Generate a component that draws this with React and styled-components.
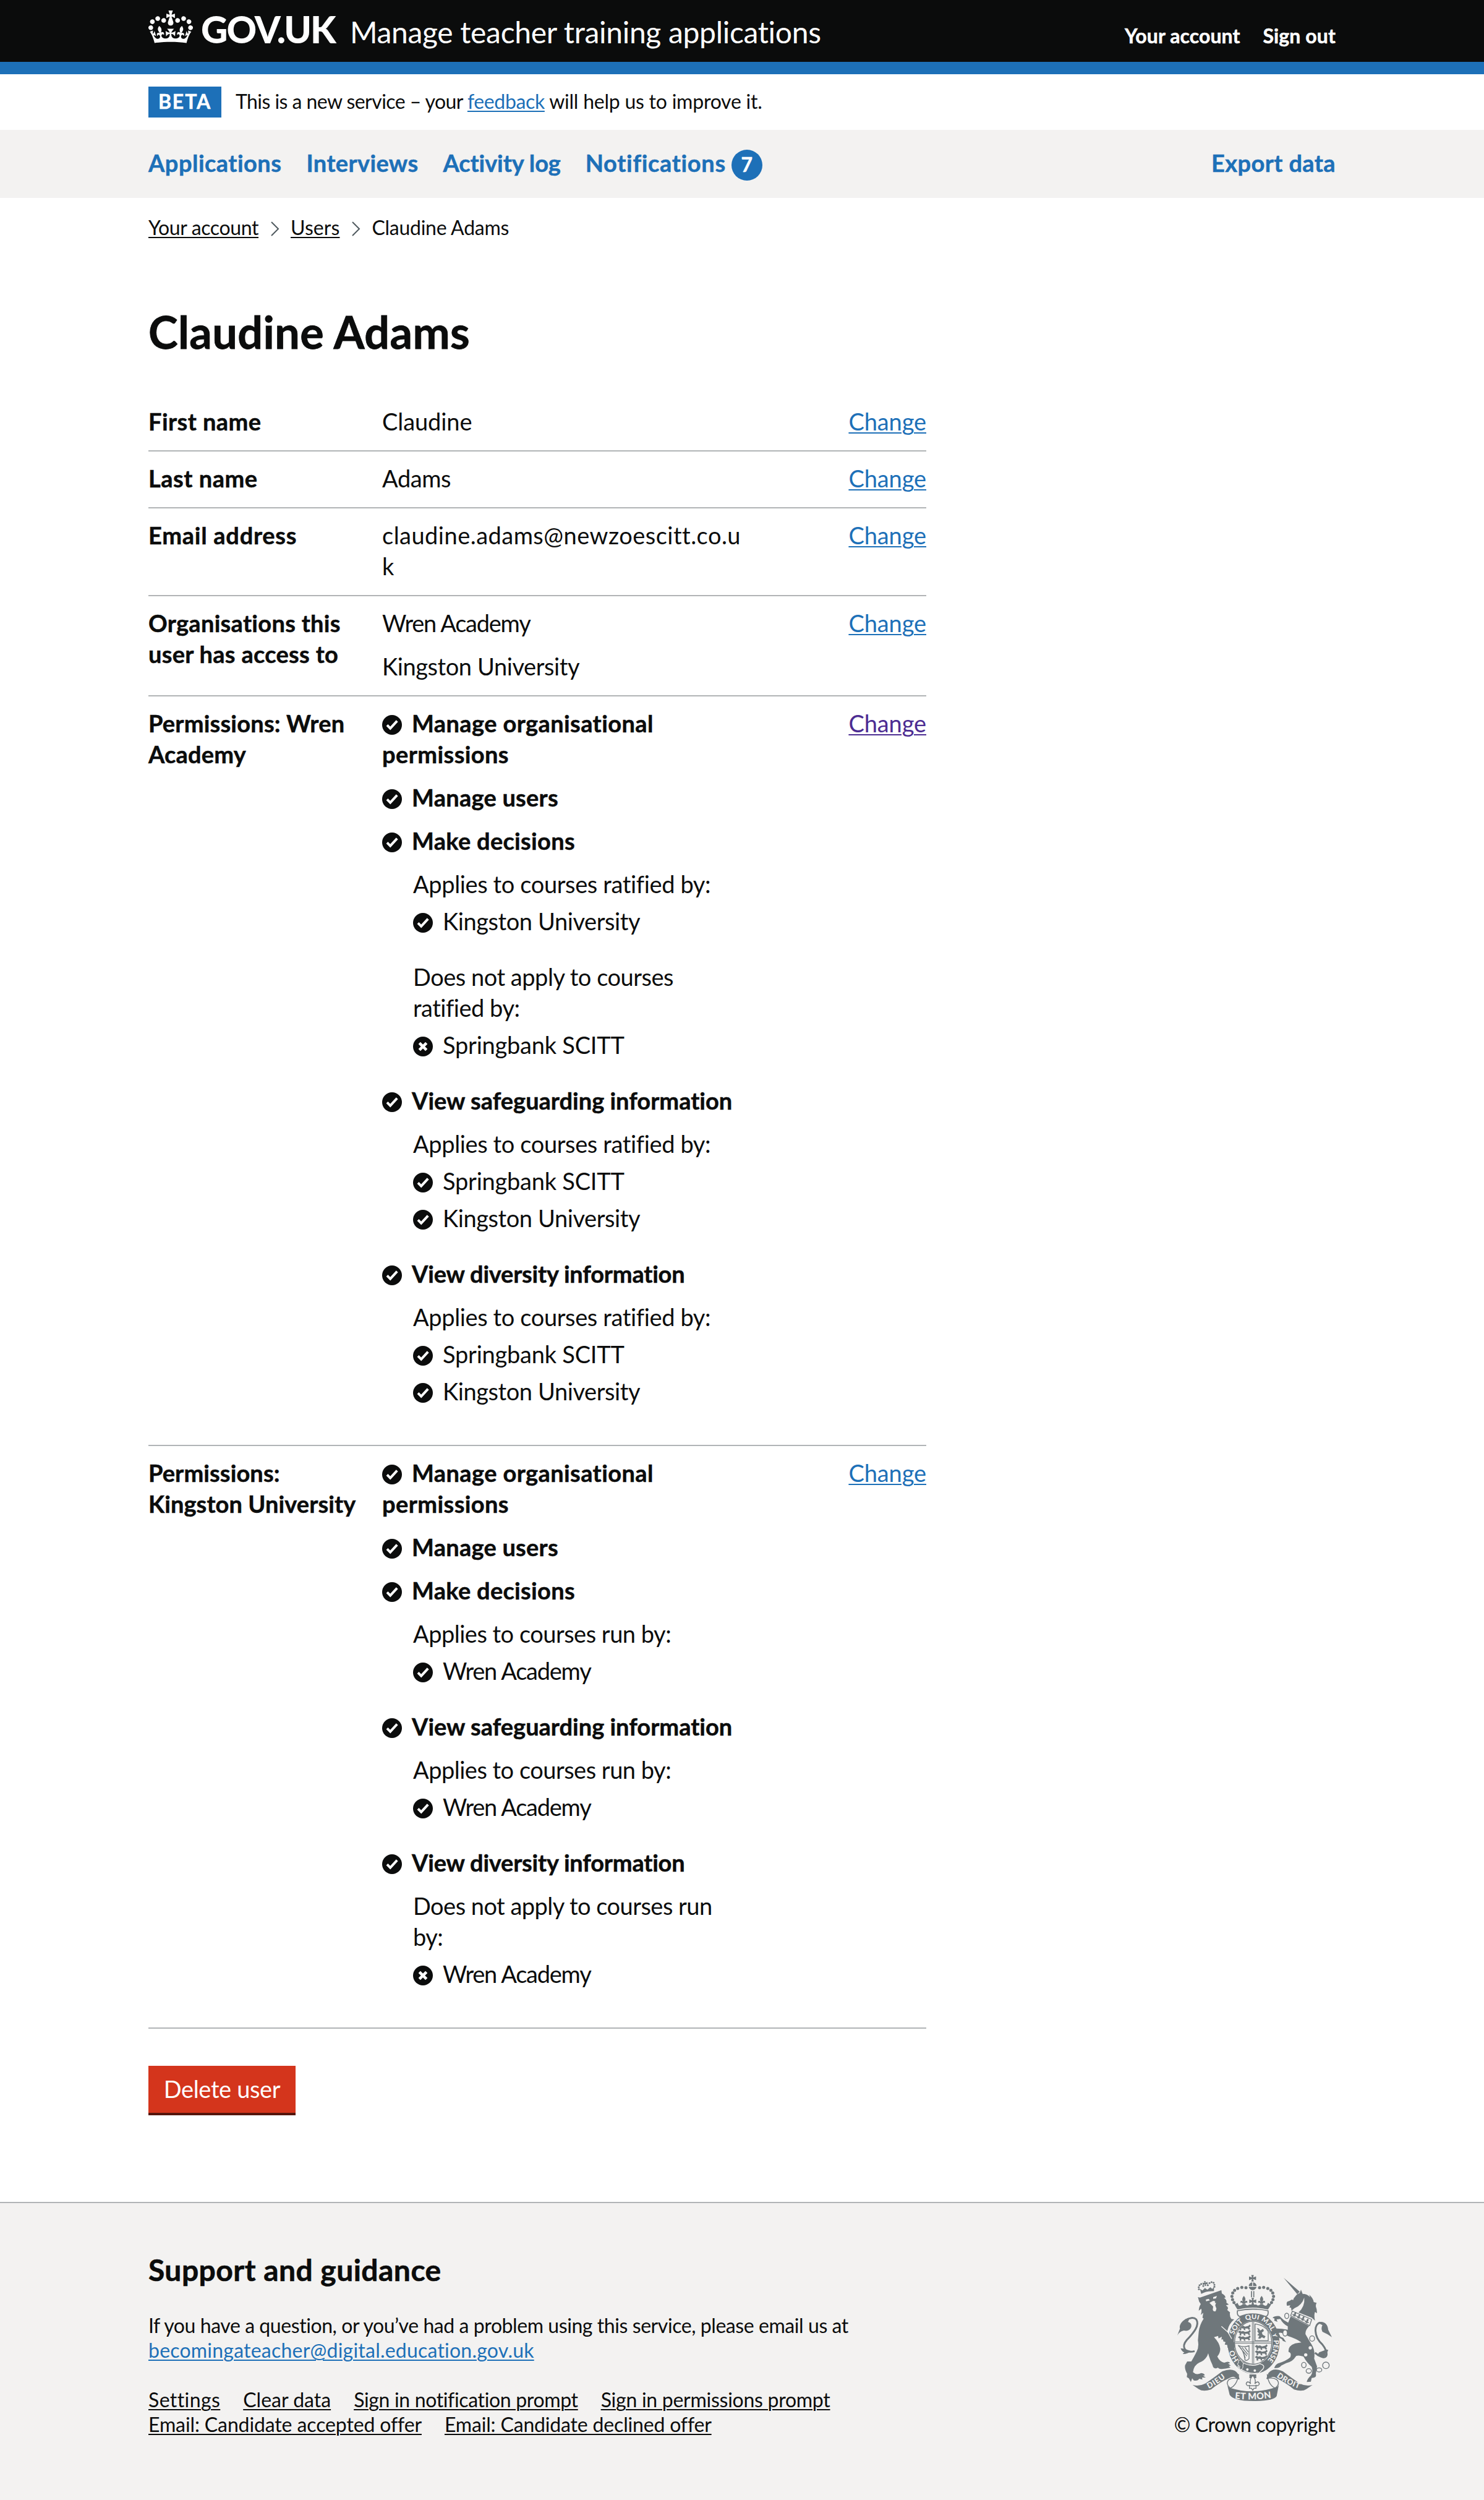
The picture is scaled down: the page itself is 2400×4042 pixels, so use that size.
import React from 'react';
import styled, { createGlobalStyle } from 'styled-components';

const ink = '#0b0c0c';
const blue = '#1d70b8';
const pale = '#f3f2f1';
const crestGrey = '#6f777b';

const GlobalStyle = createGlobalStyle`
  * { box-sizing: border-box; }
  body {
    margin: 0;
    background: #fff;
    color: ${ink};
    font-family: Lato, "Liberation Sans", sans-serif;
    font-size: 38px;
    line-height: 50px;
    font-variant-ligatures: none;
  }
  h1, h2, p, ul, ol, dl, dt, dd { margin: 0; padding: 0; }
  ul, ol { list-style: none; }
`;

const Container = styled.div`
  width: 1920px;
  margin: 0 auto;
`;

const T = styled.span`
  letter-spacing: ${(p) => p.$track || 0}px;
`;

const Link = styled.a`
  color: ${(p) => (p.$tone === 'visited' ? '#4c2c92' : p.$tone === 'text' ? ink : blue)};
  letter-spacing: ${(p) => p.$track || 0}px;
  text-decoration: underline;
  text-decoration-thickness: 2px;
  text-underline-offset: 3px;
`;

/* Header */
const Header = styled.header`
  height: 120px;
  background: ${ink};
  border-bottom: 20px solid ${blue};
  color: #fff;
`;
const HeaderRow = styled(Container)`
  display: flex;
  align-items: baseline;
  padding-top: 17px;
`;
const CrownIcon = styled.svg`
  width: 72px;
  height: 53px;
  margin-bottom: -4px;
  fill: #fff;
`;
const Wordmark = styled.span`
  width: 254px;
  padding-left: 13px;
  font-size: 60px;
  line-height: 60px;
  font-weight: 900;
  letter-spacing: -1.93px;
  white-space: nowrap;
`;
const ProductName = styled.span`
  flex: 1;
  font-size: 48px;
  letter-spacing: -0.32px;
`;
const AccountNav = styled.nav`
  display: flex;
  gap: 37px;
  font-size: 32px;
  line-height: 40px;
  font-weight: 700;
  letter-spacing: 0.1px;
  -webkit-text-stroke: 0.5px currentColor;
`;

/* Phase banner */
const PhaseBanner = styled(Container)`
  display: flex;
  align-items: baseline;
  height: 90px;
  padding-top: 20px;
  font-size: 32px;
  line-height: 40px;
`;
const PhaseTag = styled.strong`
  width: 118px;
  margin-right: 23px;
  padding: 1px 0 3px;
  background: ${blue};
  color: #fff;
  text-align: center;
  line-height: 46px;
  letter-spacing: 1.9px;
  -webkit-text-stroke: 0.5px currentColor;
`;

/* Primary navigation */
const PrimaryBar = styled.div`
  height: 110px;
  background: ${pale};
`;
const PrimaryNav = styled(Container)`
  display: flex;
  align-items: baseline;
  gap: 40px;
  padding-top: 28px;
`;
const NavItem = styled.a`
  color: ${blue};
  font-weight: 700;
  letter-spacing: ${(p) => p.$track || 0}px;
  margin-left: ${(p) => (p.$last ? 'auto' : 0)};
  -webkit-text-stroke: 0.5px currentColor;
`;
const Count = styled.span`
  display: inline-block;
  width: 50px;
  height: 50px;
  margin-left: 9px;
  padding-top: 1px;
  border-radius: 50%;
  background: ${blue};
  color: #fff;
  font-size: 32px;
  line-height: 46px;
  text-align: center;
  letter-spacing: 0;
`;

/* Breadcrumbs */
const Breadcrumbs = styled.ol`
  display: flex;
  align-items: center;
  margin-top: 28px;
  font-size: 32px;
  line-height: 40px;
`;
const Chevron = styled.svg`
  width: 14px;
  height: 26px;
  margin: 4px 18px 0 20px;
  fill: none;
  stroke: #505a5f;
  stroke-width: 2;
`;

/* Main */
const Heading = styled.h1`
  margin: 108px 0 62px;
  font-size: 72px;
  line-height: 80px;
  font-weight: 700;
  letter-spacing: 0.4px;
  -webkit-text-stroke: 0.8px currentColor;
`;
const SummaryList = styled.dl`
  width: 1258px;
`;
const SummaryRow = styled.div`
  display: grid;
  grid-template-columns: 378px 628px 1fr;
  padding: 18px 0 22px;
  border-bottom: 2px solid #b1b4b6;
`;
const Key = styled.dt`
  padding-right: 20px;
  font-weight: 700;
  letter-spacing: ${(p) => p.$track || 0}px;
  -webkit-text-stroke: 0.5px currentColor;
`;
const Value = styled.dd`
  padding-right: 40px;
  overflow-wrap: anywhere;
`;
const Action = styled.dd`
  text-align: right;
`;
const Stack = styled.ul`
  display: flex;
  flex-direction: column;
  gap: 20px;
`;
const PermissionTitle = styled.div`
  font-weight: 700;
  letter-spacing: ${(p) => p.$track || 0}px;
  -webkit-text-stroke: 0.5px currentColor;
`;
const Scope = styled.div`
  padding: ${(p) => (p.$first ? '20px' : '0')} 10px ${(p) => (p.$close ? '20px' : '40px')} 50px;
`;
const ScopeItem = styled.div`
  margin-top: 10px;
`;
const StatusSvg = styled.svg`
  width: 32px;
  height: 32px;
  margin-right: 16px;
  vertical-align: -4px;
`;
const DeleteButton = styled.button`
  display: block;
  width: 238px;
  height: 76px;
  margin: 60px 0 144px;
  padding: 12px 0 14px;
  border: 0;
  background: #d4351c;
  box-shadow: 0 4px 0 #55150b;
  color: #fff;
  font: inherit;
  letter-spacing: -0.36px;
`;

/* Footer */
const Footer = styled.footer`
  height: 482px;
  background: ${pale};
  border-top: 2px solid #b1b4b6;
  font-size: 32px;
  line-height: 40px;
`;
const FooterRow = styled(Container)`
  display: flex;
  justify-content: space-between;
  align-items: flex-start;
  padding-top: 83px;
`;
const FooterMain = styled.div`
  width: 1400px;
`;
const FooterHeading = styled.h2`
  margin-bottom: 45px;
  font-size: 48px;
  line-height: 50px;
  font-weight: 700;
  letter-spacing: 0.46px;
  -webkit-text-stroke: 0.6px currentColor;
`;
const FooterLinks = styled.ul`
  display: flex;
  flex-wrap: wrap;
  column-gap: 37px;
  margin-top: 40px;
`;
const Copyright = styled.div`
  display: flex;
  flex-direction: column;
  align-items: center;
  gap: 18px;
  width: 262px;
  padding-top: 33px;
  white-space: nowrap;
`;
const CrestSvg = styled.svg`
  width: 250px;
  height: 204px;
`;
const CrestText = styled.text`
  font-family: Lato, sans-serif;
  font-weight: 900;
  font-size: ${(p) => p.$size}px;
  letter-spacing: ${(p) => p.$track || 0}px;
  fill: ${pale};
  text-anchor: middle;
`;

function Crown() {
  return (
    <CrownIcon viewBox="0 0 132 97" aria-hidden="true">
      <path d="M25 30.2c3.5 1.5 7.7-.2 9.1-3.7 1.5-3.6-.2-7.8-3.9-9.2-3.6-1.4-7.6.3-9.1 3.9-1.4 3.5.3 7.5 3.9 9zM9 39.5c3.6 1.5 7.8-.2 9.2-3.7 1.5-3.6-.2-7.8-3.9-9.1-3.6-1.5-7.6.2-9.1 3.8-1.4 3.5.3 7.5 3.8 9zM4.4 57.2c3.5 1.5 7.7-.2 9.1-3.8 1.5-3.6-.2-7.7-3.9-9.1-3.5-1.5-7.6.3-9.1 3.8-1.4 3.5.3 7.6 3.9 9.1zm38.3-21.4c3.5 1.5 7.7-.2 9.1-3.8 1.5-3.6-.2-7.7-3.9-9.1-3.6-1.5-7.6.3-9.1 3.8-1.3 3.6.4 7.7 3.9 9.1zm64.4-5.6c-3.6 1.5-7.8-.2-9.1-3.7-1.5-3.6.2-7.8 3.8-9.2 3.6-1.4 7.7.3 9.2 3.9 1.3 3.5-.4 7.5-3.9 9zm15.9 9.3c-3.6 1.5-7.7-.2-9.1-3.7-1.5-3.6.2-7.8 3.7-9.1 3.6-1.5 7.7.2 9.2 3.8 1.5 3.5-.3 7.5-3.8 9zm4.7 17.7c-3.6 1.5-7.8-.2-9.2-3.8-1.5-3.6.2-7.7 3.9-9.1 3.6-1.5 7.7.3 9.2 3.8 1.3 3.5-.4 7.6-3.9 9.1zM89.3 35.8c-3.6 1.5-7.8-.2-9.2-3.8-1.4-3.6.2-7.7 3.9-9.1 3.6-1.5 7.7.3 9.2 3.8 1.4 3.6-.3 7.7-3.9 9.1zM69.7 17.7l8.9 4.7V9.3l-8.9 2.8c-.2-.3-.5-.6-.9-.9L72.4 0H59.6l3.5 11.2c-.3.3-.6.5-.9.9l-8.8-2.8v13.1l8.8-4.7c.3.3.6.7.9.9l-5 15.4v.1c-.2.8-.4 1.6-.4 2.4 0 4.1 3.1 7.5 7 8.1h.2c.3 0 .7.1 1 .1.4 0 .7 0 1-.1h.2c4-.6 7.1-4.1 7.1-8.1 0-.8-.1-1.7-.4-2.4V34l-5.1-15.4c.4-.2.7-.6 1-.9zM66 92.8c16.9 0 32.8 1.1 47.1 3.2 4-16.9 8.9-26.7 14-33.5l-9.6-3.4c1 4.9 1.1 7.2 0 10.2-1.5-1.4-3-4.3-4.2-8.7L108.6 76c2.8-2 5-3.2 7.5-3.3-4.4 9.4-10 11.9-13.6 11.2-4.3-.8-6.3-4.6-5.6-7.9 1-4.7 5.7-5.9 8-.5 4.3-8.7-3-11.4-7.6-8.8 7.1-7.2 7.9-13.5 2.1-21.1-8 6.1-8.1 12.3-4.5 20.8-4.7-5.4-12.1-2.5-9.5 6.2 3.4-5.2 7.9-2 7.2 3.1-.6 4.3-6.4 7.8-13.5 7.2-10.3-.9-10.9-8-11.2-13.8 2.5-.5 7.1 1.8 11 7.3L80.2 60c-4.1 4.4-8 5.3-12.3 5.4 1.4-4.4 8-11.6 8-11.6H55.5s6.4 7.2 7.9 11.6c-4.2-.1-8-1-12.3-5.4l1.4 16.4c3.9-5.5 8.5-7.7 10.9-7.3-.3 5.8-.9 12.8-11.1 13.8-7.2.6-12.9-2.9-13.5-7.2-.7-5 3.8-8.3 7.1-3.1 2.7-8.7-4.6-11.6-9.4-6.2 3.7-8.5 3.6-14.7-4.6-20.8-5.8 7.6-5 13.9 2.2 21.1-4.7-2.6-11.9.1-7.7 8.8 2.3-5.5 7.1-4.2 8.1.5.7 3.3-1.3 7.1-5.7 7.9-3.5.7-9-1.8-13.5-11.2 2.5.1 4.7 1.3 7.5 3.3l-4.7-15.4c-1.2 4.4-2.7 7.2-4.3 8.7-1.1-3-.9-5.3 0-10.2l-9.5 3.4c5 6.9 9.9 16.7 14 33.5 14.8-2.1 30.8-3.2 47.7-3.2z" />
    </CrownIcon>
  );
}

function Status({ no }) {
  return (
    <StatusSvg viewBox="0 0 32 32" aria-hidden="true">
      <circle cx="16" cy="16" r="16" fill={ink} />
      <path
        d={no ? 'M10.3 10.3l11.4 11.4M21.7 10.3L10.3 21.7' : 'M8 16.4l5.2 5.2L24.2 9.6'}
        fill="none"
        stroke="#fff"
        strokeWidth={no ? 4.6 : 4}
      />
    </StatusSvg>
  );
}

const arch = [[345, 86], [325, 85], [305, 90], [290, 99], [281, 112], [277, 128], [280, 144], [287, 158]];
const cross = 'M-6-16H6L3-4 17-9V9L3 4 6 16H-6L-3 4-17 9V-9L-3-4z';
const fleur = 'M0-22C10-10 9-2 4 6 12-2 20 2 16 12 12 8 8 10 6 16H-6C-8 10-12 8-16 12-20 2-12-2-4 6-9-2-10-10 0-22z';
const beast = 'M0 6L8 0 14 4 22 2 30 6 44 3 50-3 54 4 48 10 52 16 46 20 42 14 30 14 32 21 25 20 24 14 14 13 14 21 7 20 8 12z';

function RoyalArms() {
  return (
    <CrestSvg viewBox="12 24 750 612" fill={crestGrey} aria-label="Royal coat of arms">
      <defs>
        <path id="garter" d="M381 470A99 116 0 0 1 381 238A99 116 0 0 1 381 470" />
        <path id="scrollLeft" d="M155 580Q205 558 256 514" />
        <path id="scrollRight" d="M484 511Q545 558 614 580" />
        <path id="scrollMiddle" d="M285 624Q380 634 475 620" />
        <clipPath id="shield"><ellipse cx="380" cy="353" rx="88" ry="102" /></clipPath>
      </defs>

      {/* garter and shield */}
      <ellipse cx="382" cy="355" rx="126" ry="149" />
      <ellipse cx="380" cy="353" rx="94" ry="107" fill={pale} />
      <g clipPath="url(#shield)">
        <g fill="none" stroke={crestGrey} strokeWidth="3">
          <path d="M376 240v220M383 240v220M285 349h190M285 356h190" />
          <path d="M389 262v81h64v-44Q436 268 389 262" strokeWidth="4" />
          <path d="M307 366q28 12 53 2v62q-12 14-20 6-4-46-33-70M316 376l34 42M326 376l28 34M340 376l16 22M332 400l10 28" strokeWidth="4" />
        </g>
        {[268, 294, 320].map((y) => <path key={y} d={beast} transform={`translate(306 ${y}) scale(1.15)`} />)}
        {[364, 390, 416].map((y) => <path key={y} d={beast} transform={`translate(388 ${y}) scale(1.15)`} />)}
        <path d="M398 282l10 2 6 10 14-8 4 10-10 8 4 10 14 8-6 10-12-6-8 8-10-2 6-12-10-4 8-8-8-10 4-6z" />
      </g>
      <ellipse cx="380" cy="353" rx="90" ry="104" fill="none" stroke={crestGrey} strokeWidth="4" />
      <path d="M318 444Q370 475 412 455Q440 462 428 480L408 500Q350 510 306 470z" stroke={pale} strokeWidth="4" />
      <path d="M308 440q14-8 18 6 10 4 4 16 4 20-14 22-4-10 0-16-12-4-12-14 8 0 4-14z" stroke={pale} strokeWidth="3" />
      <circle cx="352" cy="483" r="6" fill={pale} />
      <circle cx="388" cy="488" r="6" fill={pale} />
      <CrestText $size={35}><textPath href="#garter" startOffset="16%">HO</textPath></CrestText>
      <CrestText $size={34}><textPath href="#garter" startOffset="36.5%">SOIT</textPath></CrestText>
      <CrestText $size={34}><textPath href="#garter" startOffset="49.2%">QUI</textPath></CrestText>
      <CrestText $size={34}><textPath href="#garter" startOffset="61%">MAL</textPath></CrestText>
      <CrestText $size={30}><textPath href="#garter" startOffset="69.8%">Y</textPath></CrestText>
      <CrestText $size={34}><textPath href="#garter" startOffset="80.8%">PENSE</textPath></CrestText>

      {/* crown */}
      <path d="M304 198Q378 182 452 198Q456 222 440 226Q378 200 316 226Q300 222 304 198z" fill={pale} stroke={crestGrey} strokeWidth="5" />
      <path d="M286 156Q290 172 304 192Q378 174 452 192Q466 172 472 156L462 166 452 160 446 172Q436 178 426 166H416Q404 178 396 168H360Q352 178 342 166H330Q318 178 310 172L304 160 294 166z" />
      <path d={cross} transform="translate(377 40.5)" />
      <circle cx="377.5" cy="79" r="19" />
      <path d="M357 80h41M377.5 58v20" stroke={pale} strokeWidth="4" />
      <path d="M372 103v30M383 103v30" stroke={crestGrey} strokeWidth="5" />
      <path d={cross} transform="translate(378 152)" />
      <path d={fleur} transform="translate(335 148)" />
      <path d={fleur} transform="translate(421 148)" />
      {arch.map(([x, y]) => (
        <g key={x}>
          <circle cx={x} cy={y} r="7.500" />
          <circle cx={756 - x} cy={y} r="7.500" />
        </g>
      ))}

      {/* lion */}
      <path d="M96 394C52 406 28 376 58 340 92 304 122 268 104 240 92 228 70 232 52 244" fill="none" stroke={crestGrey} strokeWidth="9" />
      <path d="M42 382L28 380Q34 396 46 400L38 408Q58 410 80 394z" />
      <path d="M72 234C48 232 18 262 25 284L12 318Q22 298 44 294 72 300 80 276 84 258 64 252z" />
      <path d="M112 132L122 134 226 98 228 114Q244 122 246 134L238 136Q254 146 250 158L262 168 248 172Q264 184 254 194L268 206Q264 222 274 238L288 240Q262 262 256 292L254 300 276 330 280 342Q294 352 290 378L280 372 276 384 266 376 256 378 254 364 242 362 246 350 234 346Q238 334 226 338L228 324 212 332 210 320 190 326Q216 352 220 380 222 402 206 420 218 446 240 450 262 440 268 452L258 454 272 464 262 466 270 474Q240 482 218 480L208 474Q196 482 186 472L182 460Q168 430 162 404 152 438 118 450 92 462 88 496 104 512 128 500 148 504 144 512L136 512 150 522 132 522 134 532 118 528Q112 540 92 536L84 526 78 544 68 526 58 520 60 504Q46 480 50 462L60 444 80 444Q94 420 106 396 118 374 112 342L116 300Q120 266 140 236L134 232 138 208 126 218Q132 200 128 188L116 198Q118 176 126 166L118 154z" />
      <path d="M226 274L258 302 276 334" fill="none" stroke={pale} strokeWidth="4" />
      <path d="M150 144l14-4 6 8-18 4zM186 132l18-6-4 12-14 2zM168 160l18-10 10 2-2 8 6 0-4 12 6 16-4 12q-12 4-14-8l2-14z" fill={pale} />
      <path d="M122 92l6 24Q156 100 190 104L190 82 182 92 172 84 158 96 146 88 134 100z" />
      <path d={cross} transform="translate(147 66) rotate(-10) scale(.7)" />
      {[[117, 94], [116, 84], [120, 74], [128, 68], [138, 78], [160, 74], [168, 64], [178, 59], [188, 62], [192, 72], [192, 82]].map(([x, y]) => (
        <circle key={`${x}-${y}`} cx={x} cy={y} r="4.6" />
      ))}
      <path d="M120 124Q160 104 206 102" fill="none" stroke={pale} strokeWidth="3" />

      {/* unicorn */}
      <path d="M680 402C744 452 750 404 716 362 672 322 674 262 706 256" fill="none" stroke={crestGrey} strokeWidth="9" />
      <path d="M736 386L744 388Q740 404 730 408L736 412Q718 430 690 416L700 400z" />
      <path d="M692 256C720 244 742 260 744 290L762 326Q740 310 716 300 708 284 716 268z" />
      <path d="M528 38L606 106 594 118z" />
      <path d="M594 118L606 112 612 96 620 116Q642 116 656 132L652 120Q672 138 674 156L688 160Q680 172 688 190L690 210 680 204Q674 220 680 246L664 232 600 206Q632 178 628 134 616 172 580 186L566 198 564 184 556 182 560 172 544 174Q540 160 546 154 574 146 588 124z" />
      <path d="M562 142l16-6-4 10z" fill={pale} />
      <path d="M570 200L664 240 654 270 562 222z" fill={pale} stroke={crestGrey} strokeWidth="4" />
      {[[582, 216], [602, 226], [622, 236], [642, 248]].map(([x, y]) => (
        <path key={x} d={fleur} transform={`translate(${x} ${y}) rotate(25) scale(.62)`} />
      ))}
      <path d="M562 226L652 272Q632 292 634 312 650 340 664 362 682 390 676 430L690 468 684 504Q690 524 664 524L660 542 640 544Q642 528 660 512 672 494 664 470 640 450 624 420 600 412 588 418 572 446 540 452L516 464Q508 478 482 476 488 460 500 454 540 442 560 424 568 402 552 398 548 368 584 356L614 352Q590 334 552 322L530 312Q516 302 504 306L512 324 526 330 540 350 524 344 520 336Q494 328 486 298L492 284Q520 284 548 290L548 274Q524 262 512 238L494 240 498 252 482 246 484 236 474 232Q484 222 508 224 526 244 550 256z" />
      <g fill="none" stroke={crestGrey} strokeWidth="4">
        <ellipse cx="543" cy="223" rx="10" ry="13" fill={pale} />
        <ellipse cx="535" cy="306" rx="11" ry="15" fill={pale} />
        <ellipse cx="666" cy="333" rx="12" ry="13" fill={pale} />
        <ellipse cx="626" cy="461" rx="11" ry="13" />
        <ellipse cx="650" cy="490" rx="13" ry="11" />
        <ellipse cx="700" cy="485" rx="13" ry="10" />
        <circle cx="733" cy="463" r="16" />
      </g>
      <circle cx="657" cy="378" r="8" fill={pale} />
      <circle cx="635" cy="412" r="8" fill={pale} />

      {/* motto scroll */}
      <path d="M86 558Q120 566 150 550 190 522 230 492 286 470 308 506L314 530 296 524Q284 512 262 526 214 548 176 580 136 592 116 578z" />
      <path d="M668 558Q634 566 604 550 564 522 524 492 478 470 454 500L444 528 466 522Q480 514 494 526 540 548 578 580 618 592 638 578z" />
      <g fill="none" stroke={crestGrey} strokeWidth="4">
        <path d="M312 530Q284 520 262 532 244 552 268 572M310 506Q302 560 268 574" />
        <path d="M446 528Q474 520 494 532 514 552 488 572M448 506Q454 560 488 574" />
      </g>
      <path d="M268 572Q378 606 488 570Q504 568 506 550L494 612Q480 636 380 636Q284 636 266 606L254 556Q256 568 268 572z" />
      <CrestText $size={37} $track={3}><textPath href="#scrollLeft" startOffset="50%">DIEU</textPath></CrestText>
      <CrestText $size={37} $track={2}><textPath href="#scrollRight" startOffset="50%">DROIT</textPath></CrestText>
      <CrestText $size={44} $track={1}><textPath href="#scrollMiddle" startOffset="50%">ET MON</textPath></CrestText>
      <path d="M362 507h33v18h-33z" />
      <path d="M378 512Q396 534 388 552 404 534 410 552 406 566 394 560V574H384L378 584 372 574H362V560Q350 566 346 552 352 534 368 552 360 534 378 512z" fill={pale} stroke={crestGrey} strokeWidth="4" />
      <path d="M362 562h32" stroke={crestGrey} strokeWidth="4" />
    </CrestSvg>
  );
}

const LEDE = {
  ratified: { track: -0.37, text: 'Applies to courses ratified by:' },
  notRatified: { track: -0.48, text: 'Does not apply to courses ratified by:' },
  run: { track: -0.5, text: 'Applies to courses run by:' },
  notRun: { track: -0.53, text: 'Does not apply to courses run by:' },
};
const ORG = {
  wren: ['Wren Academy', -1.25],
  kingston: ['Kingston University', -0.42],
  springbank: ['Springbank SCITT', -0.23],
};
const TITLE_TRACK = {
  'Manage organisational permissions': 0.4,
  'Manage users': 0.25,
  'Make decisions': 0.3,
  'View safeguarding information': 0,
  'View diversity information': -0.2,
};

const wrenPermissions = [
  { title: 'Manage organisational permissions' },
  { title: 'Manage users' },
  {
    title: 'Make decisions',
    scopes: [
      { lede: 'ratified', orgs: ['kingston'] },
      { lede: 'notRatified', orgs: ['springbank'], no: true },
    ],
  },
  { title: 'View safeguarding information', scopes: [{ lede: 'ratified', orgs: ['springbank', 'kingston'] }] },
  { title: 'View diversity information', scopes: [{ lede: 'ratified', orgs: ['springbank', 'kingston'] }] },
];
const kingstonPermissions = [
  { title: 'Manage organisational permissions' },
  { title: 'Manage users' },
  { title: 'Make decisions', scopes: [{ lede: 'run', orgs: ['wren'] }] },
  { title: 'View safeguarding information', scopes: [{ lede: 'run', orgs: ['wren'] }] },
  { title: 'View diversity information', scopes: [{ lede: 'notRun', orgs: ['wren'], no: true }] },
];

function Permissions({ items }) {
  return (
    <Stack>
      {items.map(({ title, scopes = [] }, n) => (
        <li key={title}>
          <PermissionTitle $track={TITLE_TRACK[title]}><Status />{title}</PermissionTitle>
          {scopes.map((scope, i) => (
            <Scope key={scope.lede} $first={i === 0} $close={i === scopes.length - 1 && n < items.length - 1}>
              <T $track={LEDE[scope.lede].track}>{LEDE[scope.lede].text}</T>
              {scope.orgs.map((org) => (
                <ScopeItem key={org}><Status no={scope.no} /><T $track={ORG[org][1]}>{ORG[org][0]}</T></ScopeItem>
              ))}
            </Scope>
          ))}
        </li>
      ))}
    </Stack>
  );
}

function Row({ name, track, tone, children }) {
  return (
    <SummaryRow>
      <Key $track={track}>{name}</Key>
      <Value>{children}</Value>
      <Action><Link href="#" $tone={tone} $track={-0.1}>Change</Link></Action>
    </SummaryRow>
  );
}

const footerLinks = [
  ['Settings', 0.4],
  ['Clear data', 0],
  ['Sign in notification prompt', -0.35],
  ['Sign in permissions prompt', -0.27],
  ['Email: Candidate accepted offer', -0.12],
  ['Email: Candidate declined offer', -0.17],
];

export default function App() {
  return (
    <>
      <GlobalStyle />
      <Header>
        <HeaderRow>
          <Crown />
          <Wordmark>GOV.UK</Wordmark>
          <ProductName>Manage teacher training applications</ProductName>
          <AccountNav>
            <span>Your account</span>
            <span>Sign out</span>
          </AccountNav>
        </HeaderRow>
      </Header>
      <PhaseBanner>
        <PhaseTag>BETA</PhaseTag>
        <p>
          <T $track={-0.56}>This is a new service – your </T>
          <Link href="#" $track={-0.35}>feedback</Link>
          <T $track={-0.23}> will help us to improve it.</T>
        </p>
      </PhaseBanner>
      <PrimaryBar>
        <PrimaryNav>
          <NavItem $track={0.48}>Applications</NavItem>
          <NavItem $track={0.38}>Interviews</NavItem>
          <NavItem $track={-0.1}>Activity log</NavItem>
          <NavItem $track={0.68}>Notifications<Count>7</Count></NavItem>
          <NavItem $last $track={0.4}>Export data</NavItem>
        </PrimaryNav>
      </PrimaryBar>

      <Container as="main">
        <Breadcrumbs>
          <li><Link href="#" $tone="text" $track={-0.38}>Your account</Link></li>
          <Chevron viewBox="0 0 14 26"><path d="M1 2l11 11L1 24" /></Chevron>
          <li><Link href="#" $tone="text" $track={0.1}>Users</Link></li>
          <Chevron viewBox="0 0 14 26"><path d="M1 2l11 11L1 24" /></Chevron>
          <li><T $track={-0.28}>Claudine Adams</T></li>
        </Breadcrumbs>
        <Heading>Claudine Adams</Heading>
        <SummaryList>
          <Row name="First name" track={0.44}><T $track={-0.08}>Claudine</T></Row>
          <Row name="Last name" track={0.52}><T $track={-0.43}>Adams</T></Row>
          <Row name="Email address" track={0.74}><T $track={0.48}>claudine.adams@newzoescitt.co.uk</T></Row>
          <Row name="Organisations this user has access to" track={0.3}>
            <Stack>
              <li><T $track={-1.25}>Wren Academy</T></li>
              <li><T $track={-0.42}>Kingston University</T></li>
            </Stack>
          </Row>
          <Row name="Permissions: Wren Academy" track={0.2} tone="visited"><Permissions items={wrenPermissions} /></Row>
          <Row name="Permissions: Kingston University" track={0.1}><Permissions items={kingstonPermissions} /></Row>
        </SummaryList>
        <DeleteButton>Delete user</DeleteButton>
      </Container>

      <Footer>
        <FooterRow>
          <FooterMain>
            <FooterHeading>Support and guidance</FooterHeading>
            <p>
              <T $track={-0.43}>If you have a question, or you’ve had a problem using this service, please email us at</T>
              <br />
              <Link href="#" $track={0.22}>becomingateacher@digital.education.gov.uk</Link>
            </p>
            <FooterLinks>
              {footerLinks.map(([label, track]) => (
                <li key={label}><Link href="#" $tone="text" $track={track}>{label}</Link></li>
              ))}
            </FooterLinks>
          </FooterMain>
          <Copyright>
            <RoyalArms />
            <T $track={-0.47}>© Crown copyright</T>
          </Copyright>
        </FooterRow>
      </Footer>
    </>
  );
}
